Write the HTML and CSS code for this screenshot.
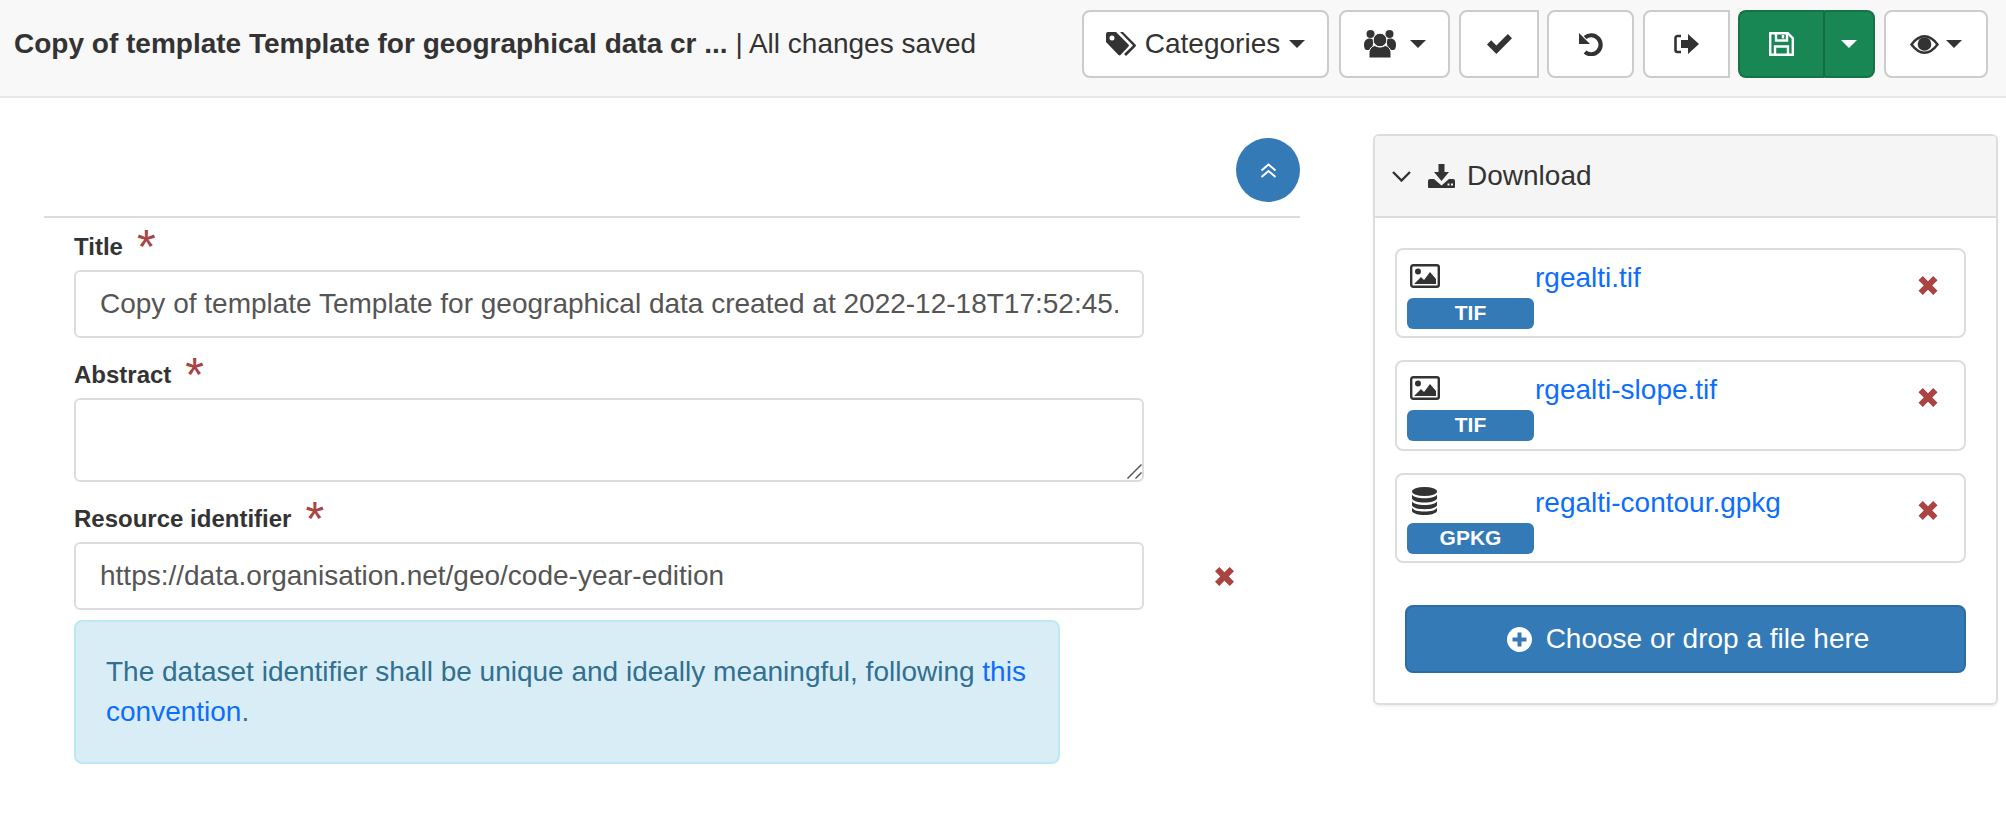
FILE: index.html
```html
<!DOCTYPE html>
<html lang="en">
<head>
<meta charset="utf-8">
<title>Copy of template</title>
<link rel="stylesheet" href="styles.css">
</head>
<body>
<header class="topbar">
  <div class="doc-title"><strong>Copy of template Template for geographical data cr ...</strong> | All changes saved</div>
  <div class="toolbar">
    <button class="btn btn-cat">
      <svg class="ic" width="30" height="24" viewBox="0 0 30 24"><path fill-rule="evenodd" d="M2 0h8l12.500 12.500a1.500 1.500 0 0 1 0 2L14.500 23a1.500 1.500 0 0 1-2 0L0 10V2a2 2 0 0 1 2-2zM6 3.500a2.500 2.500 0 1 0 0 5 2.500 2.500 0 0 0 0-5z"/><path d="M14 0h3l12.500 12.500a1.500 1.500 0 0 1 0 2L20 24l-2-2 9-8.500z"/></svg>
      <span>Categories</span><i class="caret"></i>
    </button>
    <button class="btn btn-users">
      <svg class="ic" width="32" height="28" viewBox="0 0 32 28"><circle cx="6.500" cy="4" r="4"/><circle cx="25.500" cy="4" r="4"/><path d="M0 15c0-4 2-6.500 6-6.500 2 0 3 .8 3.500 2L8 20H3c-2 0-3-2-3-5zM32 15c0-4-2-6.500-6-6.500-2 0-3 .8-3.500 2L24 20h5c2 0 3-2 3-5z"/><circle cx="16" cy="10" r="6.800" stroke="#fff" stroke-width="1"/><path d="M5 28v-5c0-4 3-7 6-7.500 3 2 7 2 10 0 3 .5 6 3.500 6 7.500v5z" stroke="#fff" stroke-width="1"/></svg>
      <i class="caret"></i>
    </button>
    <button class="btn btn-check btn-square">
      <svg class="ic" width="25" height="20" viewBox="0 0 24 19"><path d="M0 10l4-4 5 5L20 0l4 4L9 19z"/></svg>
    </button>
    <button class="btn btn-undo">
      <svg class="ic" width="24" height="24" viewBox="0 0 24 24"><path d="M6 5.500A9.500 9.500 0 1 1 6 20" fill="none" stroke="#333" stroke-width="4.200"/><path d="M0 1v11h11z"/></svg>
    </button>
    <button class="btn btn-exit btn-square">
      <svg class="ic" width="25" height="20" viewBox="0 0 25 20"><path d="M7 2H3.500a2 2 0 0 0-2 2v12a2 2 0 0 0 2 2H7" fill="none" stroke="#333" stroke-width="2.600"/><path d="M7 6h7V0l11 10-11 10v-6H7z"/></svg>
    </button>
    <div class="save-group">
      <button class="btn-save">
        <svg width="25" height="24" viewBox="0 0 25 24" fill="none" stroke="#fff" stroke-width="2.400"><path d="M1.200 1.200h17.600l5 5v16.600H1.200z"/><path d="M7 1.200v7.300h11V1.200"/><path d="M14 3v3.500"/><path d="M6 22.800v-8.300h13v8.300"/></svg>
      </button>
      <button class="btn-save-toggle"><i class="caret caret-light"></i></button>
    </div>
    <button class="btn btn-eye">
      <svg class="ic" width="29" height="19" viewBox="0 0 29 19"><path d="M1.500 9.500C6 3.500 10 1.300 14.500 1.300S23 3.500 27.500 9.500C23 15.500 19 17.700 14.500 17.700S6 15.500 1.500 9.500z" fill="none" stroke="#333" stroke-width="2.400"/><circle cx="14.500" cy="9" r="6.800"/></svg>
      <i class="caret"></i>
    </button>
  </div>
</header>

<main class="page">
  <section class="form-col">
    <div class="form-top">
      <button class="round-btn">
        <svg width="17" height="15" viewBox="0 0 17 15" fill="none" stroke="#fff" stroke-width="2"><path d="M1.500 7.500l7-6 7 6"/><path d="M1.500 14l7-6 7 6"/></svg>
      </button>
    </div>
    <div class="fields">
      <div class="field field-first">
        <label class="field-label">Title<span class="req">*</span></label>
        <input class="control" type="text" value="Copy of template Template for geographical data created at 2022-12-18T17:52:45.">
      </div>
      <div class="field">
        <label class="field-label">Abstract<span class="req">*</span></label>
        <div class="area-wrap">
          <textarea class="control control-area"></textarea>
          <svg class="grip" width="15" height="15" viewBox="0 0 15 15" fill="none" stroke="#555" stroke-width="1.400"><path d="M0.500 14.500l14-14"/><path d="M8.500 14.500l6-6"/></svg>
        </div>
      </div>
      <div class="field">
        <label class="field-label">Resource identifier<span class="req">*</span></label>
        <div class="control-row">
          <input class="control" type="text" value="https://data.organisation.net/geo/code-year-edition">
          <svg class="remove remove-field" width="19" height="19" viewBox="0 0 20 20"><path d="M0 4.500L4.500 0 10 5.500 15.500 0 20 4.500 14.500 10 20 15.500 15.500 20 10 14.500 4.500 20 0 15.500 5.500 10z"/></svg>
        </div>
        <div class="alert">The dataset identifier shall be unique and ideally meaningful, following <a href="#">this convention</a>.</div>
      </div>
    </div>
  </section>

  <aside class="panel">
    <div class="panel-head">
      <svg class="chev" width="19" height="11" viewBox="0 0 19 11" fill="none" stroke="#333" stroke-width="2.400"><path d="M1 1l8.500 8.500L18 1"/></svg>
      <svg class="ic" width="27" height="24" viewBox="0 0 27 24"><path d="M10.500 0h6v8H21l-7.500 9-7.500-9h4.500z"/><path fill-rule="evenodd" d="M1 24a1 1 0 0 1-1-1v-6a2 2 0 0 1 2-2h4l7.500 6.500L21 15h4a2 2 0 0 1 2 2v6a1 1 0 0 1-1 1zM19.500 19.500v2h2v-2zM23 19.500v2h2v-2z"/></svg>
      <span class="panel-title">Download</span>
    </div>
    <div class="panel-body">
      <div class="file">
        <div class="file-type">
          <div class="file-icon"><svg class="ic" width="30" height="24" viewBox="0 0 30 24"><rect x="1.200" y="1.200" width="27.600" height="21.600" rx="2" fill="none" stroke="#333" stroke-width="2.400"/><circle cx="8" cy="7.500" r="3"/><path d="M4 20l7-7 3 3 6-8 6 7v5z"/></svg></div>
          <div class="badge">TIF</div>
        </div>
        <a class="file-link" href="#">rgealti.tif</a>
        <svg class="remove remove-file" width="20" height="19" viewBox="0 0 20 20"><path d="M0 4.500L4.500 0 10 5.500 15.500 0 20 4.500 14.500 10 20 15.500 15.500 20 10 14.500 4.500 20 0 15.500 5.500 10z"/></svg>
      </div>
      <div class="file file-tall">
        <div class="file-type">
          <div class="file-icon"><svg class="ic" width="30" height="24" viewBox="0 0 30 24"><rect x="1.200" y="1.200" width="27.600" height="21.600" rx="2" fill="none" stroke="#333" stroke-width="2.400"/><circle cx="8" cy="7.500" r="3"/><path d="M4 20l7-7 3 3 6-8 6 7v5z"/></svg></div>
          <div class="badge">TIF</div>
        </div>
        <a class="file-link" href="#">rgealti-slope.tif</a>
        <svg class="remove remove-file" width="20" height="19" viewBox="0 0 20 20"><path d="M0 4.500L4.500 0 10 5.500 15.500 0 20 4.500 14.500 10 20 15.500 15.500 20 10 14.500 4.500 20 0 15.500 5.500 10z"/></svg>
      </div>
      <div class="file">
        <div class="file-type">
          <div class="file-icon file-icon-db"><svg class="ic" width="25" height="28" viewBox="0 0 25 28"><ellipse cx="12.500" cy="4.500" rx="12.500" ry="4.500"/><path d="M0 7.500c1.500 2.500 6 3.800 12.500 3.800S23.500 10 25 7.500v4c-1 2.500-6 4-12.500 4S1 14 0 11.500zM0 14.200c1.500 2.500 6 3.800 12.500 3.800S23.500 16.700 25 14.200v4c-1 2.500-6 4-12.500 4S1 20.700 0 18.200zM0 20.800c1.500 2.500 6 3.700 12.500 3.700S23.500 23.300 25 20.800V24c-1 2.500-6 4-12.500 4S1 26.500 0 24z"/></svg></div>
          <div class="badge">GPKG</div>
        </div>
        <a class="file-link" href="#">regalti-contour.gpkg</a>
        <svg class="remove remove-file" width="20" height="19" viewBox="0 0 20 20"><path d="M0 4.500L4.500 0 10 5.500 15.500 0 20 4.500 14.500 10 20 15.500 15.500 20 10 14.500 4.500 20 0 15.500 5.500 10z"/></svg>
      </div>
      <button class="upload">
        <svg width="25" height="25" viewBox="0 0 25 25"><path fill="#fff" fill-rule="evenodd" d="M12.500 0a12.500 12.500 0 1 1 0 25 12.500 12.500 0 0 1 0-25zM10.500 5.500v5h-5v4h5v5h4v-5h5v-4h-5v-5z"/></svg>
        <span>Choose or drop a file here</span>
      </button>
    </div>
  </aside>
</main>
</body>
</html>
```
FILE: styles.css
```css
* { box-sizing: border-box; }
html, body { margin: 0; padding: 0; background: #fff; }
body {
  font-family: "Liberation Sans", Arial, sans-serif;
  font-size: 28px;
  color: #333;
}
button { font: inherit; color: inherit; cursor: pointer; padding: 0; }

.topbar {
  height: 98px;
  padding: 0 18px 8px 14px;
  display: flex;
  justify-content: space-between;
  align-items: center;
  background: #f8f8f8;
  border-bottom: 2px solid #e7e7e7;
}
.doc-title { white-space: nowrap; }
.toolbar { display: flex; gap: 9px; }
.btn {
  height: 68px;
  display: flex;
  align-items: center;
  justify-content: center;
  background: #fff;
  border: 2px solid #ccc;
  border-radius: 8px;
}
.ic { fill: #333; display: block; flex: none; }
.caret {
  display: block;
  width: 0;
  height: 0;
  border-left: 8px solid transparent;
  border-right: 8px solid transparent;
  border-top: 8px solid #333;
}
.caret-light { border-top-color: #fff; }
.btn-cat { width: 247px; gap: 9px; margin-right: 1px; }
.btn-users { width: 111px; gap: 14px; }
.btn-check { width: 80px; }
.btn-undo { width: 87px; }
.btn-exit { width: 87px; }
.btn-eye { width: 104px; gap: 7px; }
.btn-square { border-radius: 8px 0 0 8px; margin-right: -1px; }
.save-group { display: flex; height: 68px; }
.btn-save, .btn-save-toggle {
  display: flex;
  align-items: center;
  justify-content: center;
  height: 68px;
  background: #198754;
  border: 2px solid #157347;
}
.btn-save { width: 87px; border-radius: 8px 0 0 8px; border-right-color: #146c43; }
.btn-save-toggle { width: 50px; border-radius: 0 8px 8px 0; border-left: 0; }

.page { display: flex; align-items: flex-start; padding: 0 1px 0 44px; }
.form-col { width: 1256px; flex: none; }
.form-top {
  display: flex;
  justify-content: flex-end;
  padding: 40px 0 14px;
  border-bottom: 2px solid #ddd;
}
.round-btn {
  width: 64px;
  height: 64px;
  display: flex;
  align-items: center;
  justify-content: center;
  background: #337ab7;
  border: 0;
  border-radius: 50%;
}
.fields { padding-left: 30px; }
.field { padding-top: 20px; }
.field-first { padding-top: 12px; }
.field-label {
  display: block;
  font-size: 24px;
  font-weight: 700;
  line-height: 34px;
  margin-bottom: 6px;
}
.req {
  margin-left: 14px;
  font-size: 48px;
  font-weight: 400;
  line-height: 0;
  color: #a94442;
  vertical-align: -8px;
}
.control {
  display: block;
  width: 1070px;
  height: 68px;
  padding: 0 24px;
  font: 400 28px "Liberation Sans", Arial, sans-serif;
  color: #555;
  background: #fff;
  border: 2px solid #ddd;
  border-radius: 6px;
  outline: none;
}
.area-wrap { position: relative; width: 1070px; }
.control-area { height: 84px; resize: none; }
.grip { position: absolute; right: 2px; bottom: 3px; pointer-events: none; }
.control-row { display: flex; align-items: center; }
.remove { fill: #a94442; display: block; flex: none; }
.remove-field { margin-left: 71px; }
.alert {
  width: 986px;
  margin-top: 10px;
  padding: 30px;
  font-size: 28px;
  line-height: 40px;
  color: #31708f;
  background: #d9edf7;
  border: 2px solid #bce8f1;
  border-radius: 8px;
}
a { color: #0d6efd; text-decoration: none; }

.panel {
  width: 625px;
  flex: none;
  margin: 36px 0 0 73px;
  border: 2px solid #ddd;
  border-radius: 6px;
  box-shadow: 0 2px 2px rgba(0,0,0,.05);
}
.panel-head {
  height: 82px;
  display: flex;
  align-items: center;
  padding-left: 17px;
  background: #f5f5f5;
  border-bottom: 2px solid #ddd;
  border-radius: 4px 4px 0 0;
}
.chev { margin-right: 17px; }
.panel-title { margin-left: 12px; }
.panel-body {
  display: flex;
  flex-direction: column;
  gap: 22px;
  padding: 30px 30px 30px 20px;
}
.file {
  display: flex;
  align-items: flex-start;
  padding: 12px 10px 7px;
  border: 2px solid #ddd;
  border-radius: 8px;
}
.file-tall { padding-bottom: 8px; }
.file-type { width: 127px; flex: none; }
.file-icon { height: 28px; display: flex; align-items: center; padding-left: 3px; margin-bottom: 8px; }
.file-icon-db { padding-left: 5px; }
.badge {
  height: 31px;
  font-size: 21px;
  font-weight: 700;
  line-height: 29px;
  text-align: center;
  color: #fff;
  background: #337ab7;
  border-radius: 6px;
}
.file-link { font-size: 28px; line-height: 32px; margin-left: 1px; flex: 1; }
.remove-file { margin: 14px 16px 0 0; }
.upload {
  height: 68px;
  margin: 20px 0 0 10px;
  padding-left: 5px;
  display: flex;
  align-items: center;
  justify-content: center;
  gap: 14px;
  color: #fff;
  background: #337ab7;
  border: 2px solid #2e6da4;
  border-radius: 8px;
}
```
